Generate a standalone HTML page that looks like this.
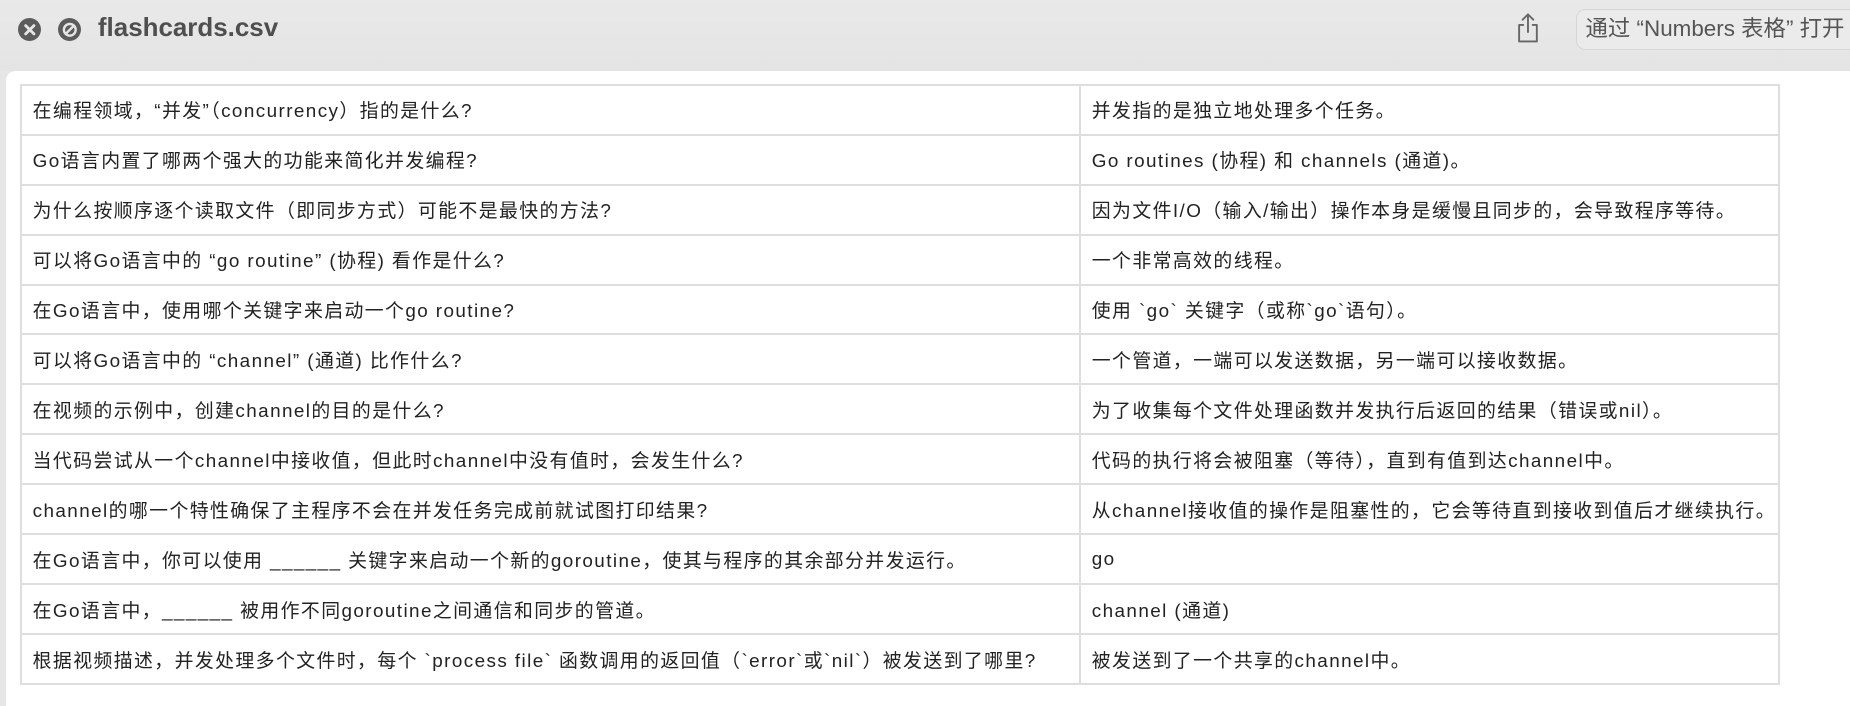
<!DOCTYPE html>
<html><head><meta charset="utf-8"><style>
html,body{margin:0;padding:0;width:1850px;height:706px;overflow:hidden;background:#e6e6e6}
#w{zoom:1.17985;width:1568px;height:598px;position:relative;font-family:"Liberation Sans","Noto Sans CJK SC",sans-serif}
#bar{position:absolute;left:0;top:0;width:1568px;height:60px;background:linear-gradient(#e9e9e9,#e4e4e4)}
.ic{position:absolute;top:15px;width:20px;height:20px;border-radius:50%;background:#5c5c5c}
#title{position:absolute;left:83px;top:12px;font-size:22px;font-weight:bold;color:#4f4f4f}
#btn{position:absolute;left:1336px;top:8px;width:260px;height:34px;box-sizing:border-box;border:1px solid #d6d6d6;border-radius:8px;background:#ebebeb;font-size:19px;color:#555;line-height:32px;padding-left:7px;white-space:nowrap}
#card{position:absolute;left:5px;top:60px;width:1563px;height:538px;background:#fff;border-top-left-radius:8px}
table{position:absolute;left:17px;top:71px;border-collapse:collapse;width:1492px;font-size:16px;letter-spacing:1.2px;color:#222;table-layout:fixed}
tr{height:42.33px}
td{border:2px solid #dedede;padding:0 0 0 9px;white-space:nowrap;overflow:hidden}
td:first-child{width:887px}
</style></head><body><div id="w">
<div id="bar">
<div class="ic" style="left:15px"><svg width="20" height="20" viewBox="0 0 20 20"><path d="M6.5 6.5l7 7M13.5 6.5l-7 7" stroke="#e6e6e6" stroke-width="2.4" stroke-linecap="round"/></svg></div>
<div class="ic" style="left:49px"><svg width="20" height="20" viewBox="0 0 20 20"><circle cx="10" cy="10" r="5" fill="none" stroke="#e6e6e6" stroke-width="2"/><path d="M13 7L7 13" stroke="#e6e6e6" stroke-width="2"/></svg></div>
<div id="title">flashcards.csv</div>
<svg style="position:absolute;left:1284px;top:10px" width="22" height="28" viewBox="0 0 22 28"><path d="M11 2v15M6.5 6.5L11 2l4.5 4.5M7 11H3.5v14h15V11H15" fill="none" stroke="#666" stroke-width="1.6" stroke-linejoin="round" stroke-linecap="round"/></svg>
<div id="btn">通过 “Numbers 表格” 打开</div>
</div>
<div id="card"></div>
<table>
<tr><td>在编程领域，“并发”（concurrency）指的是什么?</td><td>并发指的是独立地处理多个任务。</td></tr>
<tr><td>Go语言内置了哪两个强大的功能来简化并发编程?</td><td>Go routines (协程) 和 channels (通道)。</td></tr>
<tr><td>为什么按顺序逐个读取文件（即同步方式）可能不是最快的方法?</td><td>因为文件I/O（输入/输出）操作本身是缓慢且同步的，会导致程序等待。</td></tr>
<tr><td>可以将Go语言中的 “go routine” (协程) 看作是什么?</td><td>一个非常高效的线程。</td></tr>
<tr><td>在Go语言中，使用哪个关键字来启动一个go routine?</td><td>使用 `go` 关键字（或称`go`语句）。</td></tr>
<tr><td>可以将Go语言中的 “channel” (通道) 比作什么?</td><td>一个管道，一端可以发送数据，另一端可以接收数据。</td></tr>
<tr><td>在视频的示例中，创建channel的目的是什么?</td><td>为了收集每个文件处理函数并发执行后返回的结果（错误或nil）。</td></tr>
<tr><td>当代码尝试从一个channel中接收值，但此时channel中没有值时，会发生什么?</td><td>代码的执行将会被阻塞（等待），直到有值到达channel中。</td></tr>
<tr><td>channel的哪一个特性确保了主程序不会在并发任务完成前就试图打印结果?</td><td>从channel接收值的操作是阻塞性的，它会等待直到接收到值后才继续执行。</td></tr>
<tr><td>在Go语言中，你可以使用 ______ 关键字来启动一个新的goroutine，使其与程序的其余部分并发运行。</td><td>go</td></tr>
<tr><td>在Go语言中，______ 被用作不同goroutine之间通信和同步的管道。</td><td>channel (通道)</td></tr>
<tr><td>根据视频描述，并发处理多个文件时，每个 `process file` 函数调用的返回值（`error`或`nil`）被发送到了哪里?</td><td>被发送到了一个共享的channel中。</td></tr>
</table>
</div></body></html>
